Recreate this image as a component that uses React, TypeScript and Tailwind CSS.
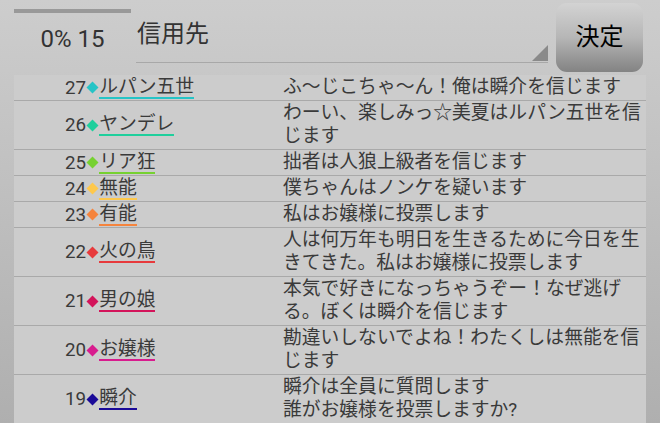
import React from 'react';

type Entry = {
  no: number;
  name: string;
  color: string;
  lines: string[];
};

const entries: Entry[] = [
  { no: 27, name: 'ルパン五世', color: '#26c4c6', lines: ['ふ～じこちゃ～ん！俺は瞬介を信じます'] },
  { no: 26, name: 'ヤンデレ', color: '#1fcf9c', lines: ['わーい、楽しみっ☆美夏はルパン五世を信', 'じます'] },
  { no: 25, name: 'リア狂', color: '#76d131', lines: ['拙者は人狼上級者を信じます'] },
  { no: 24, name: '無能', color: '#fec84c', lines: ['僕ちゃんはノンケを疑います'] },
  { no: 23, name: '有能', color: '#f5843d', lines: ['私はお嬢様に投票します'] },
  { no: 22, name: '火の鳥', color: '#e73a3c', lines: ['人は何万年も明日を生きるために今日を生', 'きてきた。私はお嬢様に投票します'] },
  { no: 21, name: '男の娘', color: '#d3145a', lines: ['本気で好きになっちゃうぞー！なぜ逃げ', 'る。ぼくは瞬介を信じます'] },
  { no: 20, name: 'お嬢様', color: '#d81c8e', lines: ['勘違いしないでよね！わたくしは無能を信', 'じます'] },
  { no: 19, name: '瞬介', color: '#1a0a98', lines: ['瞬介は全員に質問します', '誰がお嬢様を投票しますか?'] },
];

function Diamond({ color }: { color: string }) {
  return (
    <svg width="13" height="13" viewBox="0 0 13 13" className="shrink-0">
      <polygon points="6.5,0.5 12.5,6.5 6.5,12.5 0.5,6.5" fill={color} />
    </svg>
  );
}

function VoteRow({ entry }: { entry: Entry }) {
  return (
    <div className="flex bg-[#cccccc] border-b border-[#a9a9a9] py-px">
      <div className="w-[269px] shrink-0 flex items-center pl-[51px]">
        <span className="leading-[20px]">{entry.no}</span>
        <Diamond color={entry.color} />
        <span className="leading-[20px] border-b-2" style={{ borderColor: entry.color }}>
          {entry.name}
        </span>
      </div>
      <div className="flex-1 leading-[23px]">
        {entry.lines.map((line, i) => (
          <div key={i} className="whitespace-nowrap">
            {line}
          </div>
        ))}
      </div>
    </div>
  );
}

export default function App() {
  return (
    <div className="w-[660px] h-[423px] overflow-hidden bg-linear-to-b from-[#cdcdcd] to-[#afafaf] font-[Roboto,'Noto_Sans_CJK_JP',sans-serif] text-[#3a3a3a]">
      {/* header */}
      <div className="h-[75px] flex items-start pl-[14px]">
        <div className="w-[117px] flex flex-col items-center">
          <div className="w-full h-[4px] mt-[9px] bg-[#999999]" />
          <div className="mt-[14px] text-[24px] leading-[24px] text-[#333333]">0% 15</div>
        </div>
        <div className="ml-[5px] w-[412px] h-[63px] border-b border-[#a8a8a8] flex items-end justify-between">
          <div className="self-start mt-[19px] text-[24px] leading-[30px] text-[#333333] pl-px">信用先</div>
          <svg width="16" height="16" viewBox="0 0 16 16" className="mb-px">
            <polygon points="16,0 16,16 0,16" fill="#8a8a8a" />
          </svg>
        </div>
        <button className="ml-[8px] mt-[3px] w-[87px] h-[69px] rounded-[11px] bg-linear-to-b from-[#d3d3d3] via-[#b6b6b6] to-[#838383] text-[24px] text-black flex items-center justify-center pb-[2px]">
          決定
        </button>
      </div>

      {/* vote list */}
      <div className="ml-[14px] w-[632px] text-[18.8px]">
        {entries.map((e) => (
          <VoteRow key={e.no} entry={e} />
        ))}
      </div>
    </div>
  );
}
